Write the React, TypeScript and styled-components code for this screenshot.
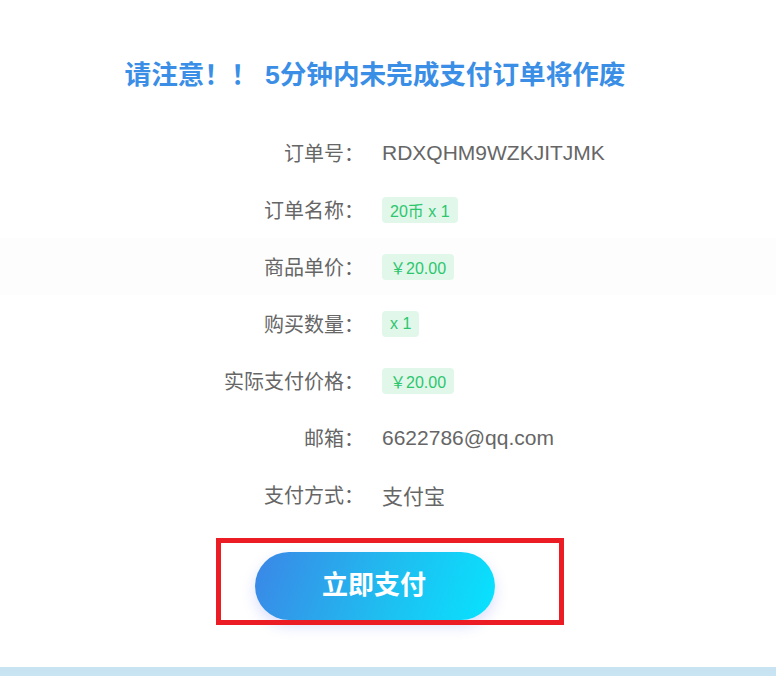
import React from "react";
import styled, { createGlobalStyle } from "styled-components";

const GlobalStyle = createGlobalStyle`
  html, body {
    margin: 0;
    padding: 0;
    background: #ffffff;
    font-family: "Liberation Sans", "Noto Sans CJK SC", sans-serif;
  }
`;

const Page = styled.div`
  width: 776px;
  height: 676px;
  overflow: hidden;
  display: flex;
  flex-direction: column;
`;

const Title = styled.h1`
  width: 750px;
  margin: 55px 0 0;
  text-align: center;
  font-size: 26.6px;
  line-height: 40px;
  font-weight: 700;
  color: #3a8ee6;
`;

const List = styled.div`
  margin-top: 29px;
  display: flex;
  flex-direction: column;
`;

const Row = styled.div<{ $shaded?: boolean }>`
  display: grid;
  grid-template-columns: 364px 1fr;
  column-gap: 18px;
  align-items: center;
  height: 57px;
  background: ${(p) => (p.$shaded ? "#fdfdfd" : "transparent")};
`;

const Label = styled.span`
  text-align: right;
  font-size: 20px;
  color: #666666;
  white-space: nowrap;
`;

const Value = styled.span`
  font-size: 21px;
  color: #666666;
`;

const Tag = styled.span`
  justify-self: start;
  display: inline-flex;
  align-items: center;
  height: 26px;
  padding: 0 8px;
  border-radius: 4px;
  background: #e1f7ea;
  color: #2dc66e;
  font-size: 16px;
`;

const ButtonArea = styled.div`
  width: 750px;
  display: flex;
  justify-content: center;
  margin-top: 29px;
`;

const PayWrap = styled.div`
  position: relative;
  width: 240px;
  height: 68px;
`;

const PayButton = styled.button`
  width: 240px;
  height: 68px;
  padding: 0 2px 8px 0;
  border: none;
  border-radius: 34px;
  background: linear-gradient(110deg, #3b86e6 0%, #1fbdf0 55%, #07e4ff 100%);
  box-shadow: 0 6px 14px rgba(90, 110, 240, 0.22);
  color: #ffffff;
  font-family: "Liberation Sans", "Noto Sans CJK SC", sans-serif;
  font-size: 26px;
  font-weight: 700;
  cursor: pointer;
`;

const Highlight = styled.div`
  position: absolute;
  left: -39px;
  top: -14px;
  width: 348px;
  height: 87px;
  box-sizing: border-box;
  border: 5px solid #ec1c24;
  pointer-events: none;
`;

const Footer = styled.div`
  margin-top: 47px;
  height: 20px;
  background: #c8e4f2;
`;

type Item = { label: string; value: string; tag?: boolean; shaded?: boolean };

const items: Item[] = [
  { label: "订单号：", value: "RDXQHM9WZKJITJMK" },
  { label: "订单名称：", value: "20币 x 1", tag: true },
  { label: "商品单价：", value: "￥20.00", tag: true, shaded: true },
  { label: "购买数量：", value: "x 1", tag: true },
  { label: "实际支付价格：", value: "￥20.00", tag: true },
  { label: "邮箱：", value: "6622786@qq.com" },
  { label: "支付方式：", value: "支付宝" },
];

export default function App() {
  return (
    <>
      <GlobalStyle />
      <Page>
        <Title>请注意！！ 5分钟内未完成支付订单将作废</Title>
        <List>
          {items.map((it) => (
            <Row key={it.label} $shaded={it.shaded}>
              <Label>{it.label}</Label>
              {it.tag ? <Tag>{it.value}</Tag> : <Value>{it.value}</Value>}
            </Row>
          ))}
        </List>
        <ButtonArea>
          <PayWrap>
            <PayButton>立即支付</PayButton>
            <Highlight />
          </PayWrap>
        </ButtonArea>
        <Footer />
      </Page>
    </>
  );
}
